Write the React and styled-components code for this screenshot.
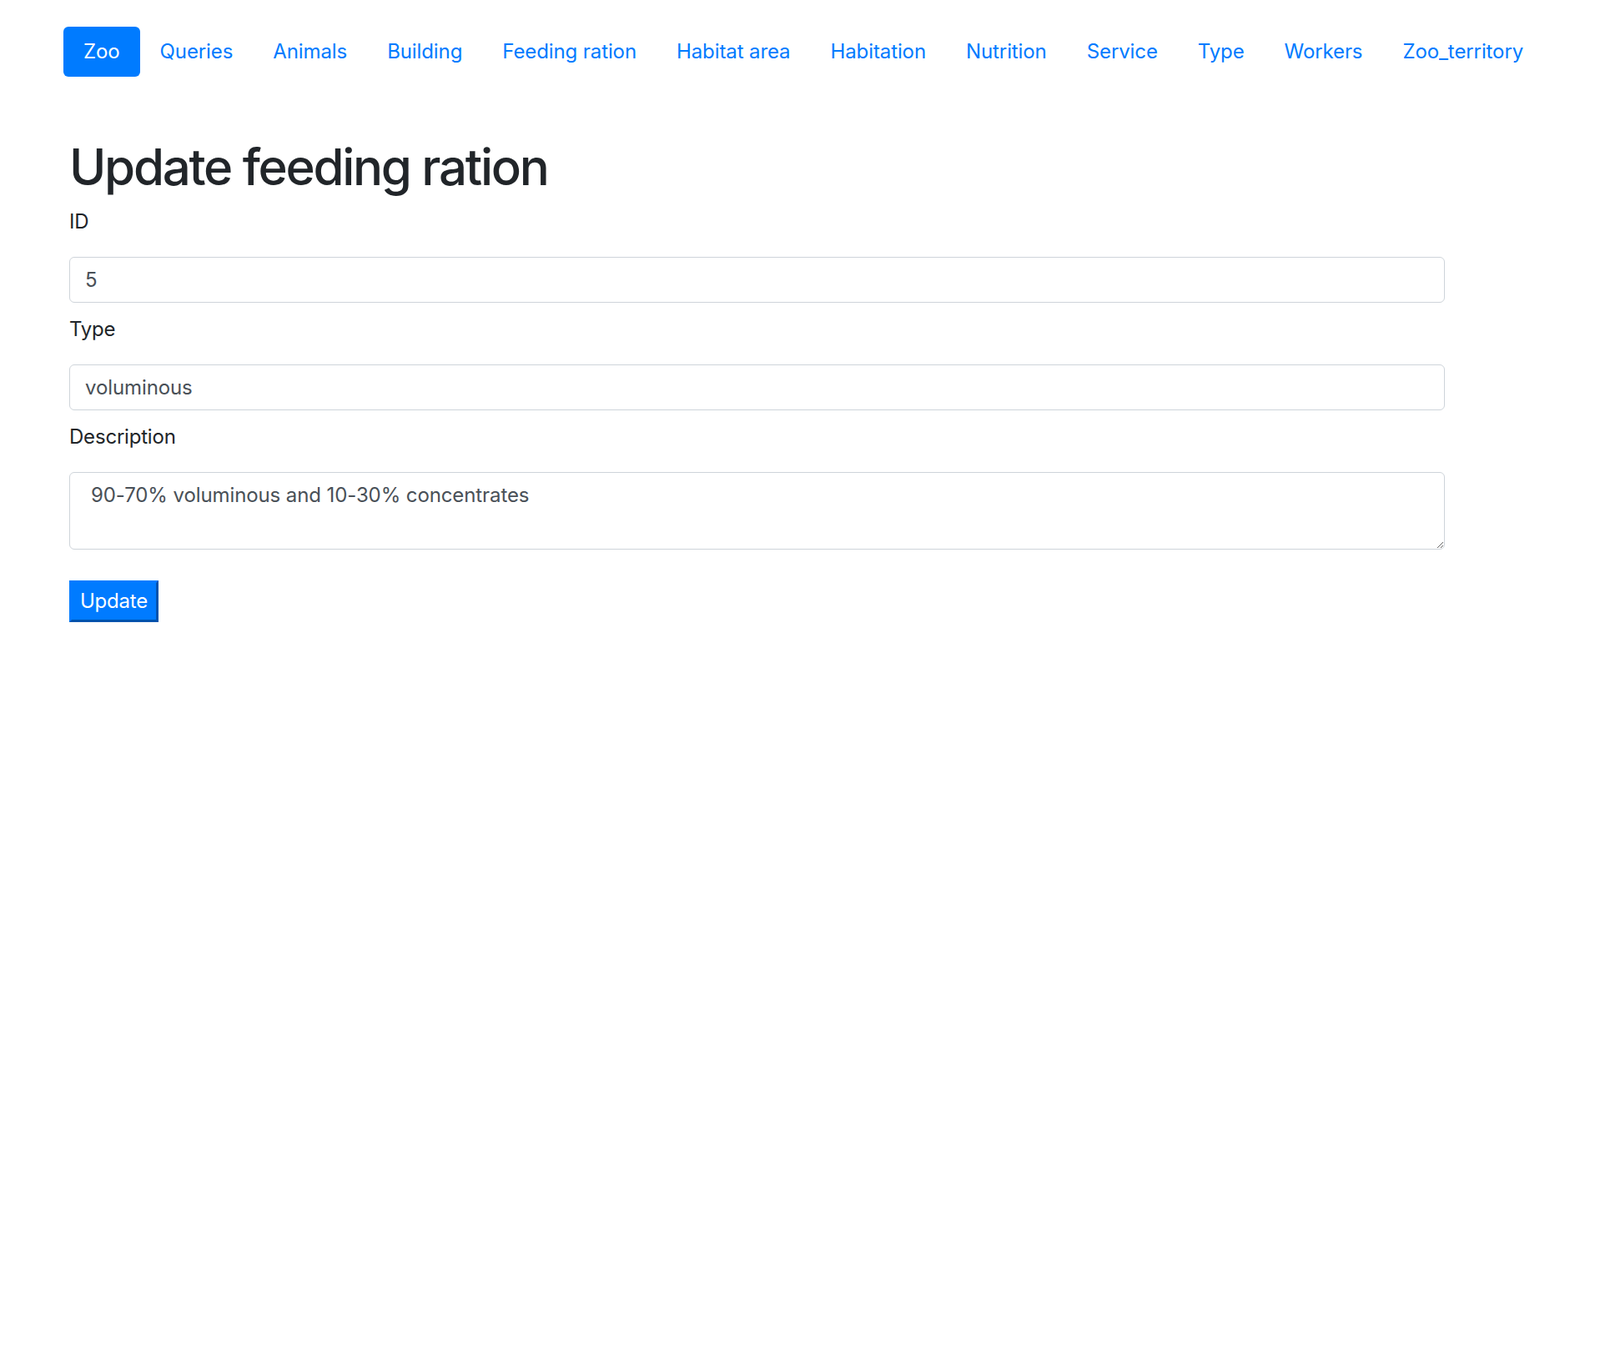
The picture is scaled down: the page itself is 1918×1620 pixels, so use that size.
import React from "react";
import styled, { createGlobalStyle } from "styled-components";

const GlobalStyle = createGlobalStyle`
  body {
    margin: 0;
    background: #fff;
    font-family: Inter, "Liberation Sans", Arial, sans-serif;
    color: #212529;
  }
  * {
    box-sizing: border-box;
  }
`;

const Page = styled.div`
  padding: 32px 0 80px 76px;
`;

const Nav = styled.ul`
  display: flex;
  list-style: none;
  margin: 0;
  padding: 0;
`;

const NavLink = styled.a`
  display: block;
  padding: 12px 24px;
  font-size: 24px;
  line-height: 36px;
  letter-spacing: -0.1px;
  color: ${(p) => (p.active ? "#fff" : "#007bff")};
  background: ${(p) => (p.active ? "#007bff" : "transparent")};
  border-radius: 6px;
  text-decoration: none;
  cursor: pointer;
`;

const Main = styled.div`
  width: 1656px;
  padding: 72px 0 0 7px;
`;

const Title = styled.h1`
  margin: 0 0 12px;
  font-size: 60px;
  line-height: 72px;
  font-weight: 500;
  letter-spacing: -2.3px;
  color: #212529;
`;

const Group = styled.div`
  margin-bottom: 14px;
`;

const Label = styled.label`
  display: block;
  font-size: 24px;
  line-height: 36px;
  letter-spacing: -0.2px;
  margin-bottom: 24px;
`;

const Input = styled.input`
  display: block;
  width: 100%;
  height: 55px;
  padding: 9px 18px;
  font-family: inherit;
  font-size: 24px;
  letter-spacing: -0.1px;
  color: #495057;
  background: #fff;
  border: 1.5px solid #ced4da;
  border-radius: 6px;
  outline: none;
`;

const TextArea = styled.textarea`
  display: block;
  width: 100%;
  height: 93px;
  padding: 9px 18px 9px 25px;
  font-family: inherit;
  font-size: 24px;
  line-height: 36px;
  letter-spacing: -0.1px;
  color: #495057;
  background: #fff;
  border: 1.5px solid #ced4da;
  border-radius: 6px;
  outline: none;
  resize: vertical;
`;

const Button = styled.button`
  margin-top: 23px;
  width: 107px;
  height: 50px;
  padding: 0 0 2px;
  font-family: inherit;
  font-size: 24px;
  letter-spacing: -0.2px;
  color: #fff;
  background: #007bff;
  border: 3px solid #007bff;
  border-right-color: #0053ad;
  border-bottom-color: #0053ad;
  border-radius: 0;
  cursor: pointer;
`;

const links = [
  "Zoo",
  "Queries",
  "Animals",
  "Building",
  "Feeding ration",
  "Habitat area",
  "Habitation",
  "Nutrition",
  "Service",
  "Type",
  "Workers",
  "Zoo_territory",
];

export default function App() {
  return (
    <Page>
      <GlobalStyle />
      <Nav>
        {links.map((l, i) => (
          <li key={l}>
            <NavLink active={i === 0}>{l}</NavLink>
          </li>
        ))}
      </Nav>
      <Main>
        <Title>Update feeding ration</Title>
        <Group>
          <Label>ID</Label>
          <Input defaultValue="5" />
        </Group>
        <Group>
          <Label>Type</Label>
          <Input defaultValue="voluminous" />
        </Group>
        <Group>
          <Label>Description</Label>
          <TextArea defaultValue="90-70% voluminous and 10-30% concentrates" />
        </Group>
        <Button>Update</Button>
      </Main>
    </Page>
  );
}
